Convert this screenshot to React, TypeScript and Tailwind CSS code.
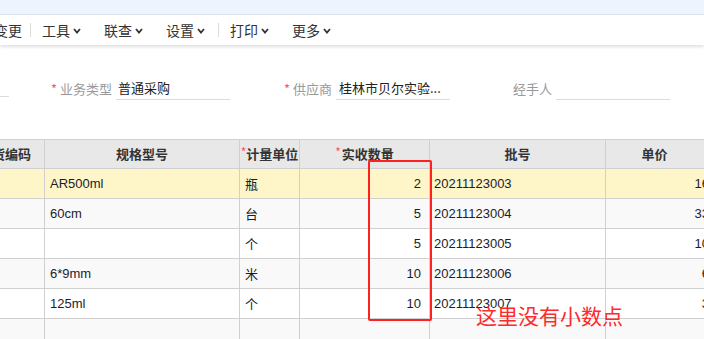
import React from "react";

const CJK = '"Noto Sans CJK SC", "Liberation Sans", sans-serif';
const ARIAL = '"Liberation Sans", "Noto Sans CJK SC", sans-serif';

function Chevron() {
  return (
    <svg width="8" height="6" viewBox="0 0 8 6" className="ml-[3px] mt-[1px]">
      <polyline points="1,1 4,4.5 7,1" fill="none" stroke="#333" strokeWidth="1.8" />
    </svg>
  );
}

function MenuItem({ label, ml }: { label: string; ml: string }) {
  return (
    <div className={`flex items-center ${ml}`}>
      <span className="text-[14px] text-[#333] leading-none">{label}</span>
      <Chevron />
    </div>
  );
}

const cols = ["w-[79px]", "w-[195px]", "w-[60px]", "w-[130px]", "w-[176px]", "w-[130px]"];

type Row = { spec: string; unit: string; qty: string; batch: string; price: string; bg: string };

const rows: Row[] = [
  { spec: "AR500ml", unit: "瓶", qty: "2", batch: "20211123003", price: "16.00", bg: "bg-[#fef5c9]" },
  { spec: "60cm", unit: "台", qty: "5", batch: "20211123004", price: "33.00", bg: "bg-[#f9f9f9]" },
  { spec: "", unit: "个", qty: "5", batch: "20211123005", price: "10.00", bg: "bg-white" },
  { spec: "6*9mm", unit: "米", qty: "10", batch: "20211123006", price: "6.00", bg: "bg-[#f9f9f9]" },
  { spec: "125ml", unit: "个", qty: "10", batch: "20211123007", price: "3.00", bg: "bg-white" },
  { spec: "", unit: "", qty: "", batch: "", price: "", bg: "bg-[#f9f9f9]" },
];

export default function App() {
  return (
    <div className="relative w-[704px] h-[339px] overflow-hidden bg-white" style={{ fontFamily: CJK }}>
      {/* top band */}
      <div className="h-[15px] bg-[#eef4fd] border-b border-[#dfe4ec]" />
      {/* toolbar */}
      <div className="relative z-10 h-[30px] bg-white flex items-center shadow-[0_2px_3px_rgba(0,0,0,0.12)]">
        <span className="ml-[-6px] text-[14px] text-[#333] leading-none">变更</span>
        <div className="ml-[8px] w-px h-[14px] bg-[#dcdcdc]" />
        <MenuItem label="工具" ml="ml-[11px]" />
        <MenuItem label="联查" ml="ml-[23px]" />
        <MenuItem label="设置" ml="ml-[23px]" />
        <div className="ml-[13px] w-px h-[14px] bg-[#dcdcdc]" />
        <MenuItem label="打印" ml="ml-[11px]" />
        <MenuItem label="更多" ml="ml-[23px]" />
      </div>

      {/* form row */}
      <div className="mt-[32px] h-[23px] flex items-end text-[13px]">
        <div className="w-[9px] h-[20px] border-b border-[#dcdcdc] mb-[3px]" />
        <span className="ml-[42px] w-[9px] self-center text-[#f5576c] leading-none">*</span>
        <span className="w-[52px] self-center text-[#9a9a9a] leading-none">业务类型</span>
        <div className="ml-[4px] w-[114px] h-[23px] border-b border-[#dcdcdc] flex items-center pl-[2px] text-[#222]">普通采购</div>
        <span className="ml-[54px] w-[9px] self-center text-[#f5576c] leading-none">*</span>
        <span className="w-[39px] self-center text-[#9a9a9a] leading-none">供应商</span>
        <div className="ml-[4px] w-[114px] h-[23px] border-b border-[#dcdcdc] flex items-center pl-[3px] text-[#222]">桂林市贝尔实验...</div>
        <span className="ml-[63px] w-[39px] self-center text-[#9a9a9a] leading-none">经手人</span>
        <div className="ml-[4px] w-[114px] h-[23px] border-b border-[#dcdcdc]" />
      </div>

      {/* table */}
      <div className="mt-[39px] ml-[-34px] w-[800px] text-[13px]">
        <div className="flex h-[30px] bg-[#e8e8e8] border-t border-b border-[#d0d0d0] font-bold text-[#333]">
          <div className={`${cols[0]} shrink-0 border-r border-[#d0d0d0] flex items-center justify-center`}>存货编码</div>
          <div className={`${cols[1]} shrink-0 border-r border-[#d0d0d0] flex items-center justify-center`}>规格型号</div>
          <div className={`${cols[2]} shrink-0 border-r border-[#d0d0d0] flex items-center justify-center`}>
            <span className="text-[#f5576c] font-normal self-start mt-[6px] text-[12px] leading-none">*</span>计量单位
          </div>
          <div className={`${cols[3]} shrink-0 border-r border-[#d0d0d0] flex items-center justify-center`}>
            <span className="text-[#f5576c] font-normal self-start mt-[6px] text-[12px] leading-none mr-[1px]">*</span>实收数量
          </div>
          <div className={`${cols[4]} shrink-0 border-r border-[#d0d0d0] flex items-center justify-center`}>批号</div>
          <div className={`${cols[5]} shrink-0 border-r border-[#d0d0d0] flex items-center justify-center pr-[32px]`}>单价</div>
        </div>
        {rows.map((r, i) => (
          <div key={i} className={`flex h-[30px] border-b border-[#d0d0d0] ${r.bg} text-[#1c1c2a]`} style={{ fontFamily: ARIAL }}>
            <div className={`${cols[0]} shrink-0 border-r border-[#d0d0d0]`} />
            <div className={`${cols[1]} shrink-0 border-r border-[#d0d0d0] flex items-center pl-[5px]`}>{r.spec}</div>
            <div className={`${cols[2]} shrink-0 border-r border-[#d0d0d0] flex items-center pl-[5px]`} style={{ fontFamily: CJK }}>{r.unit}</div>
            <div className={`${cols[3]} shrink-0 border-r border-[#d0d0d0] flex items-center justify-end pr-[8px]`}>{r.qty}</div>
            <div className={`${cols[4]} shrink-0 border-r border-[#d0d0d0] flex items-center pl-[4px]`}>{r.batch}</div>
            <div className={`${cols[5]} shrink-0 border-r border-[#d0d0d0] flex items-center justify-end pr-[8px]`}>{r.price}</div>
          </div>
        ))}
      </div>

      {/* annotation overlay */}
      <div className="absolute left-[368px] top-[160px] w-[64px] h-[161px] border-2 border-[#ff2020] rounded-[2px]" />
      <div className="absolute left-[476px] top-[305px] text-[21px] leading-none text-[#ff2a2a]" style={{ fontFamily: CJK }}>
        这里没有小数点
      </div>
    </div>
  );
}
